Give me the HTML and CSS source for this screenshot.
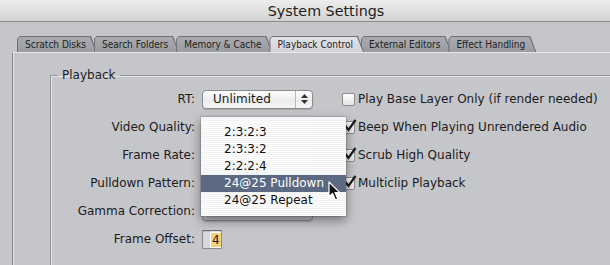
FILE: index.html
```html
<!DOCTYPE html>
<html lang="en">
<head>
  <meta charset="UTF-8">
  <title>System Settings</title>
  <link rel="stylesheet" href="styles.css">
</head>
<body>
  <div class="window">
    <div class="titlebar">System Settings</div>
    <div class="content">
      <div class="tabs">
        <div class="tab">Scratch Disks</div>
        <div class="tab">Search Folders</div>
        <div class="tab">Memory &amp; Cache</div>
        <div class="tab tab--active">Playback Control</div>
        <div class="tab">External Editors</div>
        <div class="tab">Effect Handling</div>
      </div>
      <div class="panel">
        <fieldset class="group">
          <legend class="group__title">Playback</legend>
          <div class="form">
            <span class="form__label">RT:</span>
            <div class="popup">Unlimited<span class="popup__arrows"><svg width="7" height="10" viewBox="0 0 7 10"><path d="M3.5 0 L7 4 L0 4 Z M0 6 L7 6 L3.5 10 Z" fill="#333"/></svg></span></div>
            <label class="check"><span class="check__box"></span>Play Base Layer Only (if render needed)</label>

            <span class="form__label">Video Quality:</span>
            <div class="popup"><span class="popup__arrows"></span></div>
            <label class="check"><span class="check__box"><svg width="14" height="14" viewBox="0 0 14 14"><path d="M2.5 7 L5.5 11 L12.5 1" stroke="#1a1a1a" stroke-width="2.2" fill="none"/></svg></span>Beep When Playing Unrendered Audio</label>

            <span class="form__label">Frame Rate:</span>
            <div class="popup"><span class="popup__arrows"></span></div>
            <label class="check"><span class="check__box"><svg width="14" height="14" viewBox="0 0 14 14"><path d="M2.5 7 L5.5 11 L12.5 1" stroke="#1a1a1a" stroke-width="2.2" fill="none"/></svg></span>Scrub High Quality</label>

            <span class="form__label">Pulldown Pattern:</span>
            <div class="popup"><span class="popup__arrows"></span></div>
            <label class="check"><span class="check__box"><svg width="14" height="14" viewBox="0 0 14 14"><path d="M2.5 7 L5.5 11 L12.5 1" stroke="#1a1a1a" stroke-width="2.2" fill="none"/></svg></span>Multiclip Playback</label>

            <span class="form__label">Gamma Correction:</span>
            <div class="popup popup--dim">Accurate<span class="popup__arrows"><svg width="7" height="10" viewBox="0 0 7 10"><path d="M3.5 0 L7 4 L0 4 Z M0 6 L7 6 L3.5 10 Z" fill="#333"/></svg></span></div>
            <span></span>

            <span class="form__label">Frame Offset:</span>
            <div class="field"><span class="field__sel">4</span></div>
            <span></span>
          </div>
        </fieldset>
      </div>
    </div>

    <ul class="menu">
      <li class="menu__item">2:3:2:3</li>
      <li class="menu__item">2:3:3:2</li>
      <li class="menu__item">2:2:2:4</li>
      <li class="menu__item menu__item--hot">24@25 Pulldown</li>
      <li class="menu__item">24@25 Repeat</li>
    </ul>

    <svg class="cursor" width="13" height="20" viewBox="0 0 13 20">
      <path d="M1 1 L1 16 L4.5 12.5 L7.5 19 L9.8 18 L7 11.6 L11.8 11.6 Z" fill="#111" stroke="#fff" stroke-width="1.2" stroke-linejoin="round"/>
    </svg>
  </div>
</body>
</html>
```

FILE: styles.css
```css
html {
  box-sizing: border-box;
}

*, *:before, *:after {
  box-sizing: inherit;
}

body {
  margin: 0;
  background: #c5c6ca;
  font-family: "DejaVu Sans", sans-serif;
  font-size: 12px;
  color: #1b1b1b;
  overflow: hidden;
}

.window {
  position: relative;
  width: 610px;
  height: 265px;
  overflow: hidden;
}

.titlebar {
  height: 22px;
  line-height: 23px;
  padding-left: 42px;
  text-align: center;
  font-size: 14.3px;
  color: #1e1e1e;
  background: linear-gradient(#ededed, #d2d2d2);
  border-bottom: 1px solid #8c8c8c;
}

.content {
  padding: 14px 0 0 12px;
}

/* tabs */
.tabs {
  display: flex;
  height: 16px;
  padding-left: 5px;
}

.tab {
  position: relative;
  z-index: 0;
  height: 16px;
  padding: 0 11px 0 8px;
  margin-right: -3px;
  font-family: "DejaVu Sans Condensed", "DejaVu Sans", sans-serif;
  font-size: 10px;
  line-height: 17px;
  color: #1e1e1e;
  background: #6e7075;
  clip-path: polygon(0 100%, 0 3px, 3px 0, calc(100% - 6px) 0, 100% 100%);
}

.tab:before {
  content: '';
  position: absolute;
  top: 1px;
  left: 1px;
  right: 1px;
  bottom: 0;
  background: linear-gradient(#a9abb0, #9a9ca1);
  clip-path: polygon(0 100%, 0 2px, 2px 0, calc(100% - 6px) 0, 100% 100%);
  z-index: -1;
}

.tab--active {
  z-index: 2;
}

.tab--active:before {
  background: linear-gradient(#e2e3e6, #d2d3d7);
}

/* panel */
.panel {
  height: 220px;
  border-left: 1px solid #85878b;
  border-top: 1px solid #e7e8ea;
  box-shadow: inset 1px 0 0 #dcdde0;
}

.group {
  margin: 15px -40px 0 37px;
  padding: 2px 0 0 0;
  height: 240px;
  min-width: 0;
  border: 1px solid #96979b;
  box-shadow: inset 1px 1px 0 #e3e4e6;
}

.group__title {
  margin-left: 7px;
  padding: 0 4px;
  font-size: 12px;
  line-height: 15px;
}

.form {
  display: grid;
  grid-template-columns: 144px 133px 1fr;
  grid-auto-rows: 28px;
  column-gap: 7px;
  align-items: center;
}

.form__label {
  text-align: right;
  white-space: nowrap;
}

/* popup buttons */
.popup {
  position: relative;
  width: 111px;
  height: 19px;
  line-height: 17px;
  padding-left: 10px;
  border: 1px solid #8a8b8f;
  border-radius: 4px;
  background: linear-gradient(#fdfdfd, #ececec 55%, #f6f6f6);
  box-shadow: 0 1px 1px rgba(0,0,0,0.15);
}

.popup--dim {
  color: #6a6a6a;
  background: linear-gradient(#d6d6d8, #bdbec1);
}

.popup__arrows {
  position: absolute;
  top: 0;
  right: 0;
  width: 17px;
  height: 17px;
  border-left: 1px solid #b7b8bb;
  display: flex;
  align-items: center;
  justify-content: center;
}

/* checkboxes */
.check {
  display: flex;
  align-items: center;
  white-space: nowrap;
}

.check__box {
  position: relative;
  width: 13px;
  height: 13px;
  margin-right: 3px;
  border: 1px solid #8d8e92;
  border-radius: 2px;
  background: linear-gradient(#ffffff, #e4e4e4);
}

.check__box svg {
  position: absolute;
  left: 0;
  top: -3px;
}

/* text field */
.field {
  width: 20px;
  height: 19px;
  padding: 2px 0 0 8px;
  border: 1px solid #8a8b8f;
  border-top-color: #6d6e72;
  background: linear-gradient(90deg, #d8d8da 0 7px, #fff 7px);
  box-shadow: inset 0 1px 1px rgba(0,0,0,0.15);
  line-height: 14px;
}

.field__sel {
  display: inline-block;
  padding: 0 1px;
  background: #f6d27c;
}

/* open menu */
.menu {
  position: absolute;
  left: 201px;
  top: 117px;
  width: 145px;
  height: 99px;
  margin: 0;
  padding: 7px 0 0 0;
  list-style: none;
  background: rgba(250,250,250,0.96);
  background-image: repeating-linear-gradient(rgba(255,255,255,0.6) 0 1px, rgba(236,236,236,0.5) 1px 2px);
  box-shadow: 0 4px 10px rgba(0,0,0,0.45), 0 0 0 1px rgba(0,0,0,0.12);
}

.menu__item {
  height: 17px;
  line-height: 17px;
  padding-left: 23px;
  color: #111;
}

.menu__item--hot {
  background: #5b6a82;
  color: #fff;
}

.cursor {
  position: absolute;
  left: 328px;
  top: 181px;
}
```
